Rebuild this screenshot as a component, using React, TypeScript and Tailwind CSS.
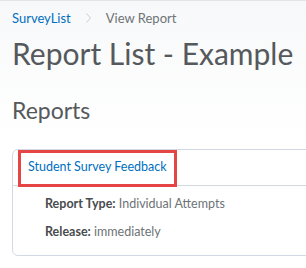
import React from 'react';

const App: React.FC = () => {
  return (
    <div className="w-[306px] h-[268px] overflow-hidden bg-gradient-to-b from-[#f7f8f9] via-white to-white font-['Lato',sans-serif] border-t border-[#e3e5e8]">
      <div className="px-3">
        {/* Breadcrumb */}
        <div className="flex items-center h-[14px] mt-[10px] text-[13px] leading-none">
          <span className="text-[#006fbf]">SurveyList</span>
          <svg className="mx-[15px]" width="5" height="10" viewBox="0 0 5 10" fill="none">
            <path d="M0.5 0.5 L4.5 5 L0.5 9.5" stroke="#c9cdd1" strokeWidth="1" />
          </svg>
          <span className="text-[#6e7376]">View Report</span>
        </div>

        {/* Title */}
        <h1 className="mt-[13px] text-[30px] leading-none text-[#55595c] whitespace-nowrap">
          Report List - Example
        </h1>

        <h2 className="mt-[31px] text-[23px] leading-none text-[#55595c]">Reports</h2>

        {/* Report card */}
        <div className="mt-[27px] w-[320px] h-[107px] border border-[#d3d9e3] rounded-md bg-white">
          <div className="h-[36px] border-b border-[#d3d9e3] relative">
            <div className="absolute left-[5px] top-[0px] w-[159px] h-[37px] border-[3px] border-[#e64545]" />
            <span className="absolute left-[15px] top-[11px] text-[12.5px] leading-none text-[#006fbf]">
              Student Survey Feedback
            </span>
          </div>
          <div className="pl-[32px] pt-[12px] text-[12.5px] leading-none text-[#6e7376]">
            <p>
              <span className="font-bold text-[#494c4e]">Report Type:</span> Individual Attempts
            </p>
            <p className="mt-[15px]">
              <span className="font-bold text-[#494c4e]">Release:</span> immediately
            </p>
          </div>
        </div>
      </div>
    </div>
  );
};

export default App;
